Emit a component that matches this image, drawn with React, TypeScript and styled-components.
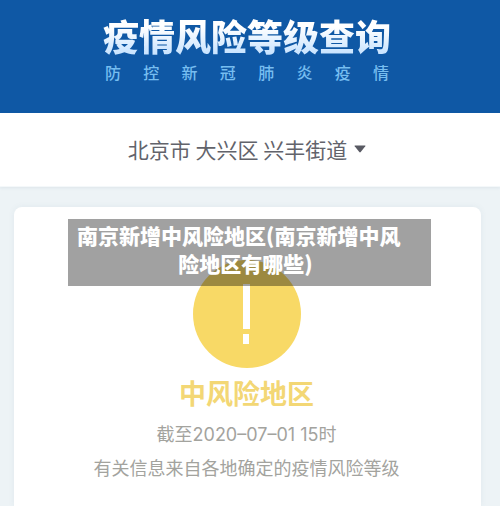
import React from "react";
import styled, { createGlobalStyle } from "styled-components";

const GlobalStyle = createGlobalStyle`
  * { box-sizing: border-box; }
  body {
    margin: 0;
    background: #edf3f6;
    font-family: "Noto Sans CJK SC", "Noto Sans", sans-serif;
  }
  h1, h2, p { margin: 0; }
`;

const Page = styled.div`
  position: relative;
  display: flex;
  flex-direction: column;
  min-height: 100vh;
`;

const Header = styled.header`
  display: flex;
  justify-content: center;
  padding: 15px 6px 29px 0;
  background: #0f58a5;
`;

const Brand = styled.div`
  display: flex;
  flex-direction: column;
`;

const Title = styled.h1`
  font-size: 36px;
  line-height: 40px;
  font-weight: 900;
  color: transparent;
  background: linear-gradient(#ffffff 30%, #c9e4ff 95%);
  background-clip: text;
  -webkit-background-clip: text;
`;

const Subtitle = styled.p`
  margin-top: 5px;
  padding: 0 2px;
  font-size: 16px;
  line-height: 24px;
  font-weight: 500;
  color: #76bdf0;
  text-align: justify;
  text-align-last: justify;
  text-justify: inter-character;
`;

const LocationBar = styled.div`
  display: flex;
  justify-content: center;
  padding: 20px 6px 21px 0;
  background: #ffffff;
  border-bottom: 1px solid #f4f8fa;
  box-shadow: 0 1px 3px rgba(80, 120, 140, 0.1);
`;

const LocationButton = styled.button`
  display: flex;
  align-items: center;
  gap: 7px;
  padding: 0;
  border: 0;
  background: none;
  font-family: inherit;
  font-size: 21px;
  line-height: 32px;
  color: #62636b;
  cursor: pointer;
`;

const Card = styled.main`
  flex: 1;
  display: flex;
  flex-direction: column;
  align-items: center;
  margin: 20px 19px 0 14px;
  padding: 53px 2px 20px 0;
  border-radius: 8px 8px 0 0;
  background: #ffffff;
  box-shadow: 0 0 6px rgba(80, 120, 140, 0.08);
`;

const Level = styled.h2`
  margin-top: 5px;
  font-size: 27px;
  line-height: 40px;
  font-weight: 700;
  color: #f3d775;
`;

const Info = styled.p`
  font-size: 18px;
  line-height: 33px;
  color: #a3a39e;
`;

const DateInfo = styled(Info)`
  margin-top: 5px;
  font-family: Inter, "Noto Sans CJK SC", sans-serif;
`;

const Caption = styled.div`
  position: absolute;
  top: 219px;
  left: 68px;
  right: 69px;
  padding: 2px 17px 9px 9px;
  background: rgba(0, 0, 0, 0.37);
  color: #ffffff;
  font-size: 21px;
  line-height: 28px;
  font-weight: 900;
  text-align: left;
  text-align-last: center;
`;

export default function App() {
  return (
    <>
      <GlobalStyle />
      <Page>
        <Header>
          <Brand>
            <Title>疫情风险等级查询</Title>
            <Subtitle>防控新冠肺炎疫情</Subtitle>
          </Brand>
        </Header>
        <LocationBar>
          <LocationButton type="button">
            北京市 大兴区 兴丰街道
            <svg width="12" height="8" viewBox="0 0 12 8" aria-hidden="true">
              <path d="M1 .5h10q.8 0 .3.7L6.7 7q-.7.8-1.4 0L.7 1.2Q.2.5 1 .5Z" fill="#595a63" />
            </svg>
          </LocationButton>
        </LocationBar>
        <Card>
          <svg width="108" height="108" viewBox="0 0 108 108" aria-hidden="true">
            <circle cx="54" cy="54" r="54" fill="#f8d966" />
            <path d="M50 24h7v45h-7zM50 74h6v10h-6z" fill="#ffffff" />
          </svg>
          <Level>中风险地区</Level>
          <DateInfo>截至2020–07–01 15时</DateInfo>
          <Info>有关信息来自各地确定的疫情风险等级</Info>
        </Card>
        <Caption>南京新增中风险地区(南京新增中风险地区有哪些)</Caption>
      </Page>
    </>
  );
}
